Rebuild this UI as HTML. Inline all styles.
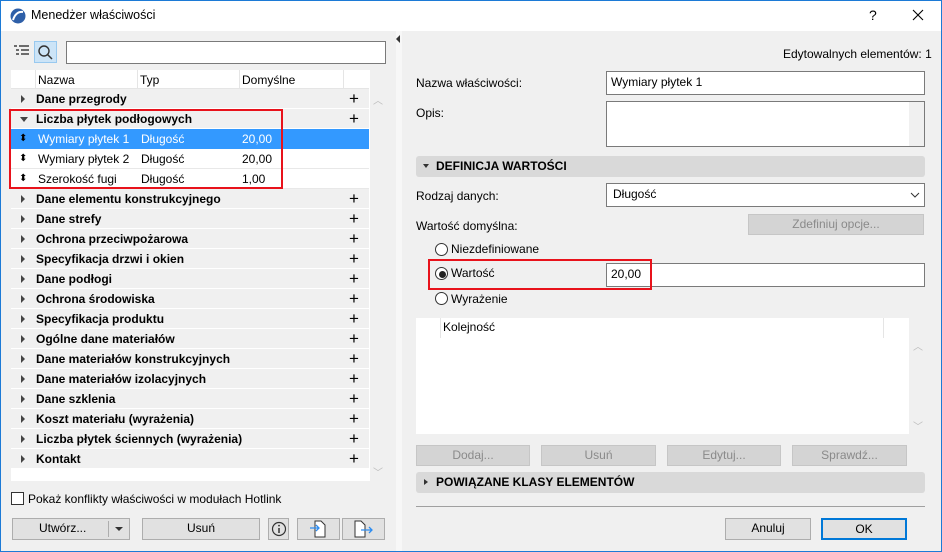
<!DOCTYPE html>
<html><head><meta charset="utf-8"><style>
*{box-sizing:border-box;margin:0;padding:0}
body{width:942px;height:552px;overflow:hidden;font-family:"Liberation Sans","DejaVu Sans",sans-serif;font-size:12px;color:#000;background:#f0f0f0;position:relative}
.a{position:absolute}
.win{left:0;top:0;width:942px;height:552px;border:1px solid #1c7ad6}
.btn{position:absolute;background:#e1e1e1;border:1px solid #adadad;text-align:center;line-height:19px}
.dis{background:#d4d4d4;border:1px solid #c6c6c6;color:#8a8a8a}
.inp{position:absolute;background:#fff;border:1px solid #7a7a7a;padding-left:4px;line-height:21px}
.row{position:absolute;left:11px;width:358px;height:20px;line-height:20px}
.cat{background:#f0f0f0;border-bottom:1px solid #fff;font-weight:bold}
.cat .t{position:absolute;left:25px}
.cat .tri{position:absolute;left:10px;top:6px;width:0;height:0;border-left:4px solid #444;border-top:4px solid transparent;border-bottom:4px solid transparent}
.cat .pl{position:absolute;left:338px;top:3px;font-weight:normal;font-size:17px;line-height:14px}
.sub{background:#fff;border-bottom:1px solid #e8e8e8}
.sub span{position:absolute}
.sec{position:absolute;left:416px;width:509px;height:21px;background:#d9d9d9;border-radius:3px;font-weight:bold;line-height:21px;padding-left:20px}
.rad{position:absolute;width:13px;height:13px;border:1px solid #333;border-radius:50%;background:#fff}
</style></head><body>
<div class="a win"></div>
<div class="a" style="left:1px;top:1px;width:940px;height:30px;background:#fff"></div>
<svg class="a" style="left:10px;top:8px" width="16" height="16"><circle cx="8" cy="8" r="7.5" fill="#2e5fa8"/><path d="M3 12 Q6 3 13 4" stroke="#fff" stroke-width="2" fill="none"/></svg>
<div class="a" style="left:31px;top:8px;font-size:12.5px">Menedżer właściwości</div>
<div class="a" style="left:869px;top:7px;font-size:14px">?</div>
<svg class="a" style="left:912px;top:9px" width="12" height="12"><path d="M1 1L11 11M11 1L1 11" stroke="#000" stroke-width="1.1"/></svg>
<div class="a" style="left:396px;top:31px;width:6px;height:520px;background:#f7f7f7"></div>
<div class="a" style="left:396px;top:35px;width:0;height:0;border-right:4px solid #333;border-top:4px solid transparent;border-bottom:4px solid transparent"></div>
<svg class="a" style="left:13px;top:44px" width="18" height="14"><g stroke="#333" stroke-width="1.4"><line x1="1" y1="2" x2="4" y2="2"/><line x1="6" y1="2" x2="16" y2="2"/><line x1="3" y1="6" x2="6" y2="6"/><line x1="8" y1="6" x2="16" y2="6"/><line x1="3" y1="10" x2="6" y2="10"/><line x1="8" y1="10" x2="16" y2="10"/></g></svg>
<div class="a" style="left:34px;top:41px;width:23px;height:22px;background:#cce4f7;border:1px solid #99c9ef"></div>
<svg class="a" style="left:37px;top:44px" width="18" height="18"><circle cx="7" cy="7" r="5" stroke="#333" stroke-width="1.4" fill="none"/><line x1="10.5" y1="10.5" x2="15" y2="15" stroke="#333" stroke-width="1.5"/></svg>
<div class="inp" style="left:66px;top:41px;width:320px;height:23px"></div>
<div class="a" style="left:11px;top:70px;width:359px;height:411px;background:#fff"></div>
<div class="a" style="left:11px;top:70px;width:358px;height:19px;background:#fff;border-bottom:1px solid #e5e5e5"></div>
<div class="a" style="left:35px;top:70px;width:1px;height:19px;background:#e5e5e5"></div>
<div class="a" style="left:137px;top:70px;width:1px;height:19px;background:#e5e5e5"></div>
<div class="a" style="left:239px;top:70px;width:1px;height:19px;background:#e5e5e5"></div>
<div class="a" style="left:343px;top:70px;width:1px;height:19px;background:#e5e5e5"></div>
<div class="a" style="left:38px;top:73px">Nazwa</div>
<div class="a" style="left:140px;top:73px">Typ</div>
<div class="a" style="left:242px;top:73px">Domyślne</div>
<div class="row cat" style="top:89px"><div class="tri"></div><span class="t">Dane przegrody</span><span class="pl">+</span></div>
<div class="row cat" style="top:109px"><div class="a" style="left:9px;top:8px;border-top:5px solid #444;border-left:4px solid transparent;border-right:4px solid transparent"></div><span class="t">Liczba płytek podłogowych</span><span class="pl">+</span></div>
<div class="row" style="top:129px;background:#3399ff;color:#fff"><span class="a" style="left:8px;color:#000;font-size:10px">⬍</span><span class="a" style="left:27px">Wymiary płytek 1</span><span class="a" style="left:130px">Długość</span><span class="a" style="left:231px">20,00</span></div>
<div class="row sub" style="top:149px"><span style="left:8px;font-size:10px">⬍</span><span style="left:27px">Wymiary płytek 2</span><span style="left:130px">Długość</span><span style="left:231px">20,00</span></div>
<div class="row sub" style="top:169px"><span style="left:8px;font-size:10px">⬍</span><span style="left:27px">Szerokość fugi</span><span style="left:130px">Długość</span><span style="left:231px">1,00</span></div>
<div class="row cat" style="top:189px"><div class="tri"></div><span class="t">Dane elementu konstrukcyjnego</span><span class="pl">+</span></div>
<div class="row cat" style="top:209px"><div class="tri"></div><span class="t">Dane strefy</span><span class="pl">+</span></div>
<div class="row cat" style="top:229px"><div class="tri"></div><span class="t">Ochrona przeciwpożarowa</span><span class="pl">+</span></div>
<div class="row cat" style="top:249px"><div class="tri"></div><span class="t">Specyfikacja drzwi i okien</span><span class="pl">+</span></div>
<div class="row cat" style="top:269px"><div class="tri"></div><span class="t">Dane podłogi</span><span class="pl">+</span></div>
<div class="row cat" style="top:289px"><div class="tri"></div><span class="t">Ochrona środowiska</span><span class="pl">+</span></div>
<div class="row cat" style="top:309px"><div class="tri"></div><span class="t">Specyfikacja produktu</span><span class="pl">+</span></div>
<div class="row cat" style="top:329px"><div class="tri"></div><span class="t">Ogólne dane materiałów</span><span class="pl">+</span></div>
<div class="row cat" style="top:349px"><div class="tri"></div><span class="t">Dane materiałów konstrukcyjnych</span><span class="pl">+</span></div>
<div class="row cat" style="top:369px"><div class="tri"></div><span class="t">Dane materiałów izolacyjnych</span><span class="pl">+</span></div>
<div class="row cat" style="top:389px"><div class="tri"></div><span class="t">Dane szklenia</span><span class="pl">+</span></div>
<div class="row cat" style="top:409px"><div class="tri"></div><span class="t">Koszt materiału (wyrażenia)</span><span class="pl">+</span></div>
<div class="row cat" style="top:429px"><div class="tri"></div><span class="t">Liczba płytek ściennych (wyrażenia)</span><span class="pl">+</span></div>
<div class="row cat" style="top:449px"><div class="tri"></div><span class="t">Kontakt</span><span class="pl">+</span></div>
<div class="a" style="left:370px;top:89px;width:15px;height:392px;background:#f0f0f0"></div>
<div class="a" style="left:373px;top:92px;color:#bbb;font-size:10px">︿</div>
<div class="a" style="left:373px;top:464px;color:#bbb;font-size:10px">﹀</div>
<div class="a" style="left:9px;top:109px;width:274px;height:80px;border:2px solid #e8121b"></div>
<div class="a" style="left:11px;top:492px;width:13px;height:13px;border:1px solid #333;background:#fff"></div>
<div class="a" style="left:28px;top:492px">Pokaż konflikty właściwości w modułach Hotlink</div>
<div class="btn" style="left:12px;top:518px;width:118px;height:22px;text-align:left;padding-left:26px">Utwórz...</div>
<div class="a" style="left:108px;top:521px;width:1px;height:16px;background:#adadad"></div>
<div class="a" style="left:115px;top:527px;border-top:4px solid #333;border-left:4px solid transparent;border-right:4px solid transparent"></div>
<div class="btn" style="left:142px;top:518px;width:118px;height:22px">Usuń</div>
<div class="btn" style="left:268px;top:518px;width:21px;height:22px"></div>
<svg class="a" style="left:271px;top:521px" width="16" height="16"><circle cx="8" cy="8" r="6.5" stroke="#333" stroke-width="1.2" fill="none"/><line x1="8" y1="7" x2="8" y2="12" stroke="#333" stroke-width="1.5"/><circle cx="8" cy="4.6" r="0.9" fill="#333"/></svg>
<div class="btn" style="left:297px;top:518px;width:43px;height:22px"></div>
<svg class="a" style="left:309px;top:520px" width="20" height="18"><path d="M6 1h6l4 4v12H6z" fill="#fff" stroke="#333"/><path d="M1 8h9M7 5l3 3-3 3" stroke="#2d8cf0" fill="none" stroke-width="1.3"/></svg>
<div class="btn" style="left:342px;top:518px;width:43px;height:22px"></div>
<svg class="a" style="left:353px;top:520px" width="22" height="18"><path d="M2 1h6l4 4v12H2z" fill="#fff" stroke="#333"/><path d="M8 10h11M16 7l3 3-3 3" stroke="#2d8cf0" fill="none" stroke-width="1.3"/></svg>
<div class="a" style="left:783px;top:47px">Edytowalnych elementów: 1</div>
<div class="a" style="left:416px;top:76px">Nazwa właściwości:</div>
<div class="inp" style="left:606px;top:71px;width:319px;height:24px">Wymiary płytek 1</div>
<div class="a" style="left:416px;top:106px">Opis:</div>
<div class="inp" style="left:606px;top:101px;width:319px;height:46px"></div>
<div class="a" style="left:909px;top:102px;width:15px;height:44px;background:#f0f0f0"></div>
<div class="sec" style="top:156px">DEFINICJA WARTOŚCI</div>
<div class="a" style="left:423px;top:164px;border-top:4px solid #333;border-left:3.5px solid transparent;border-right:3.5px solid transparent"></div>
<div class="a" style="left:416px;top:189px">Rodzaj danych:</div>
<div class="inp" style="left:606px;top:183px;width:319px;height:24px;padding-left:6px">Długość</div>
<svg class="a" style="left:910px;top:191px" width="10" height="8"><path d="M1 2l4 4 4-4" stroke="#333" fill="none"/></svg>
<div class="a" style="left:416px;top:219px">Wartość domyślna:</div>
<div class="btn dis" style="left:748px;top:214px;width:176px;height:21px">Zdefiniuj opcje...</div>
<div class="rad" style="left:435px;top:243px"></div><div class="a" style="left:451px;top:242px">Niezdefiniowane</div>
<div class="rad" style="left:435px;top:267px"></div><div class="a" style="left:439px;top:271px;width:7px;height:7px;border-radius:50%;background:#222"></div><div class="a" style="left:451px;top:266px">Wartość</div>
<div class="inp" style="left:606px;top:263px;width:319px;height:24px">20,00</div>
<div class="rad" style="left:435px;top:292px"></div><div class="a" style="left:451px;top:292px">Wyrażenie</div>
<div class="a" style="left:428px;top:259px;width:224px;height:31px;border:2px solid #e8121b"></div>
<div class="a" style="left:416px;top:318px;width:493px;height:116px;background:#fff"></div>
<div class="a" style="left:909px;top:338px;width:16px;height:96px;background:#f0f0f0"></div>
<div class="a" style="left:440px;top:318px;width:1px;height:20px;background:#e5e5e5"></div>
<div class="a" style="left:883px;top:318px;width:1px;height:20px;background:#e5e5e5"></div>
<div class="a" style="left:443px;top:320px">Kolejność</div>
<div class="a" style="left:913px;top:338px;color:#bbb;font-size:10px">︿</div>
<div class="a" style="left:913px;top:418px;color:#bbb;font-size:10px">﹀</div>
<div class="btn dis" style="left:416px;top:445px;width:114px;height:21px">Dodaj...</div>
<div class="btn dis" style="left:541px;top:445px;width:115px;height:21px">Usuń</div>
<div class="btn dis" style="left:667px;top:445px;width:114px;height:21px">Edytuj...</div>
<div class="btn dis" style="left:792px;top:445px;width:115px;height:21px">Sprawdź...</div>
<div class="sec" style="top:472px">POWIĄZANE KLASY ELEMENTÓW</div>
<div class="a" style="left:424px;top:479px;border-left:4px solid #333;border-top:3.5px solid transparent;border-bottom:3.5px solid transparent"></div>
<div class="a" style="left:416px;top:506px;width:509px;height:1px;background:#a0a0a0"></div>
<div class="btn" style="left:725px;top:518px;width:86px;height:22px">Anuluj</div>
<div class="btn" style="left:821px;top:518px;width:86px;height:22px;border:2px solid #0078d7;line-height:18px">OK</div>
</body></html>
